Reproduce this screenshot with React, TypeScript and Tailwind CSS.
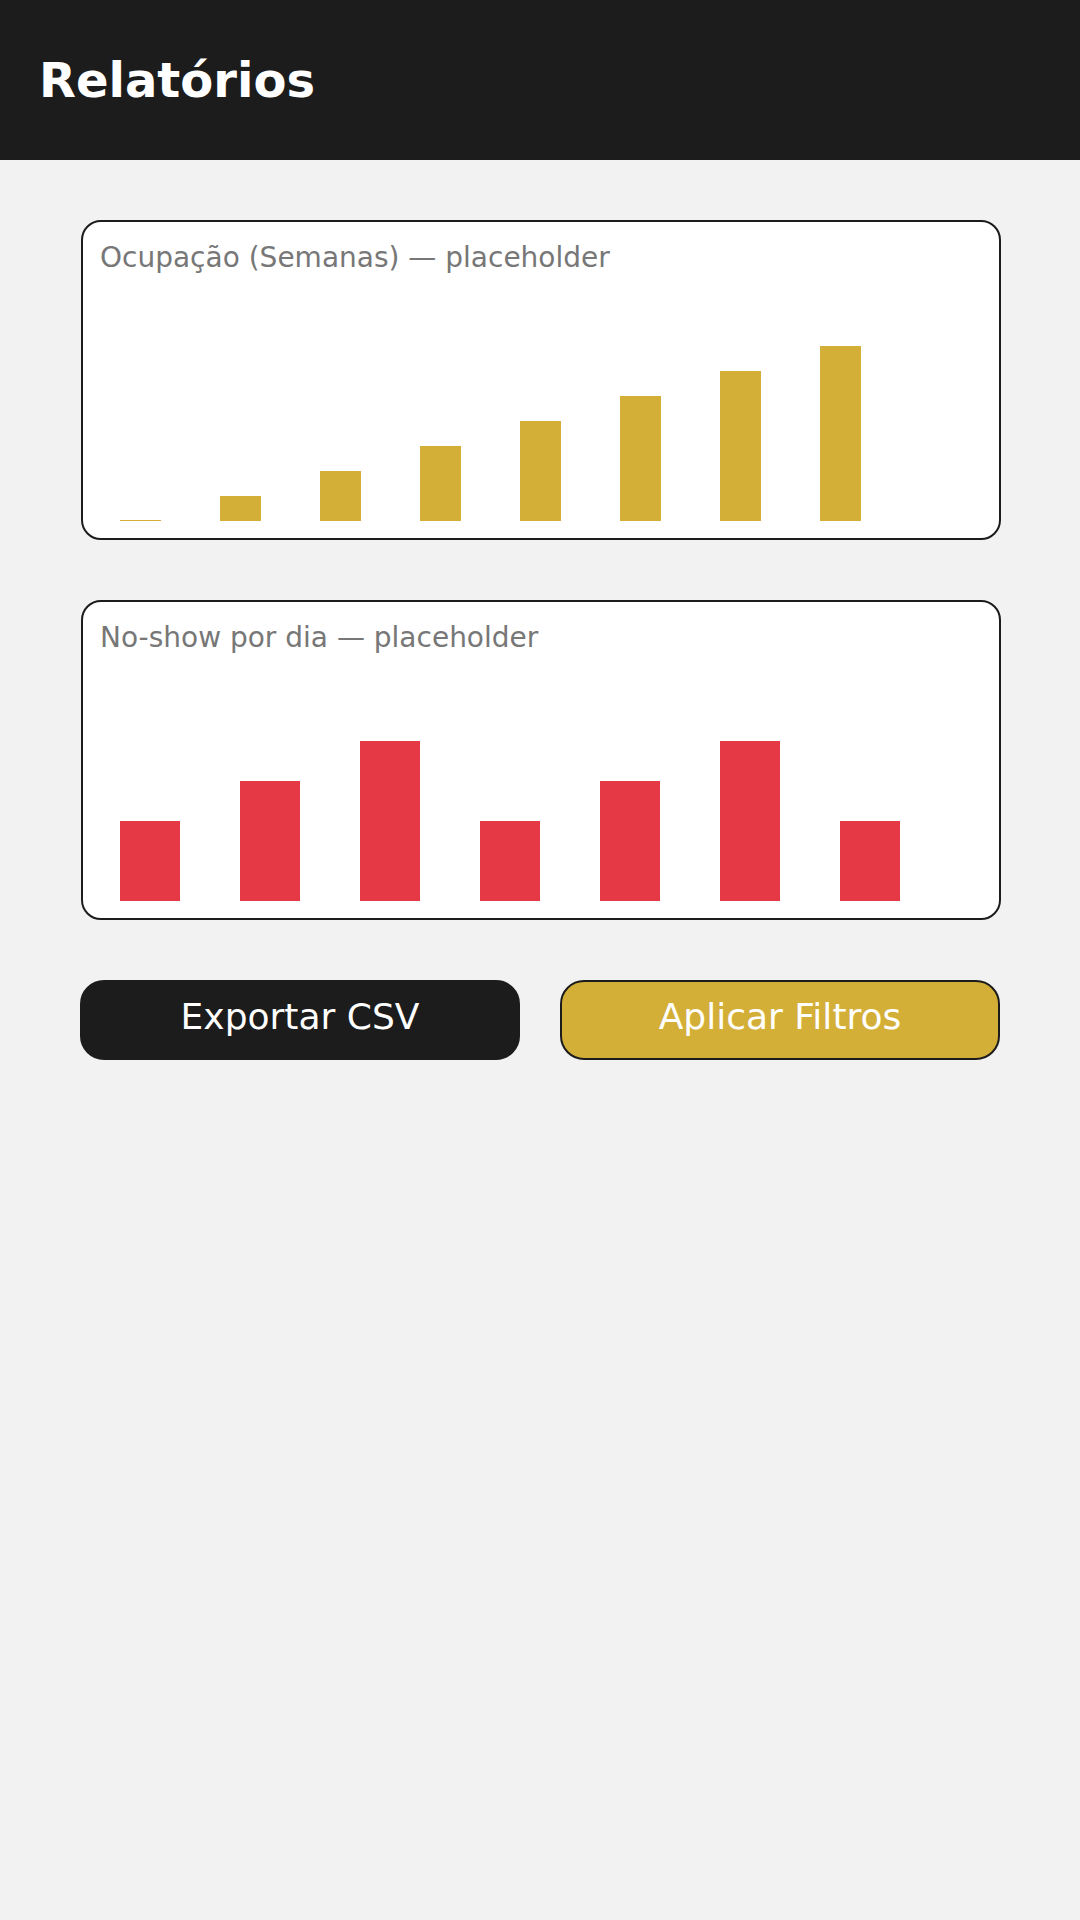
const occupancy = [0, 25, 50, 75, 100, 125, 150, 175]
const noShow = [80, 120, 160, 80, 120, 160, 80]

function ChartCard({ title, children }: { title: string; children: React.ReactNode }) {
  return (
    <div className="ml-px flex h-[320px] w-[920px] flex-col rounded-[20px] border-2 border-[#1c1c1c] bg-white pb-[17px] pl-[17px] pt-[15px]">
      <p className="text-[28px] leading-normal text-[#777777]">{title}</p>
      <div className="mt-auto">{children}</div>
    </div>
  )
}

export default function App() {
  return (
    <div className="min-h-screen bg-[#f2f2f2] font-['DejaVu_Sans',sans-serif]">
      {/* Header */}
      <header className="flex h-[160px] items-center bg-[#1c1c1c] px-[39px]">
        <h1 className="text-[48px] font-bold leading-normal text-white">Relatórios</h1>
      </header>

      <main className="flex flex-col gap-[60px] px-20 pt-[60px]">
        <ChartCard title="Ocupação (Semanas) — placeholder">
          <svg width="880" height="200" className="block">
            {occupancy.map((v, i) => (
              <rect key={i} x={20 + i * 100} y={200 - Math.max(v, 1)} width="41" height={Math.max(v, 1)} fill="#d4af37" />
            ))}
          </svg>
        </ChartCard>

        <ChartCard title="No-show por dia — placeholder">
          <svg width="880" height="200" className="block">
            {noShow.map((v, i) => (
              <rect key={i} x={20 + i * 120} y={200 - v} width="60" height={v} fill="#e63946" />
            ))}
          </svg>
        </ChartCard>

        <div className="flex gap-10">
          <button className="flex h-20 w-[440px] items-center justify-center rounded-[24px] border-2 border-[#1c1c1c] bg-[#1c1c1c] pb-[7px] text-[36px] text-white">
            Exportar CSV
          </button>
          <button className="flex h-20 w-[440px] items-center justify-center rounded-[24px] border-2 border-[#1c1c1c] bg-[#d4af37] pb-[7px] text-[36px] text-white">
            Aplicar Filtros
          </button>
        </div>
      </main>
    </div>
  )
}
